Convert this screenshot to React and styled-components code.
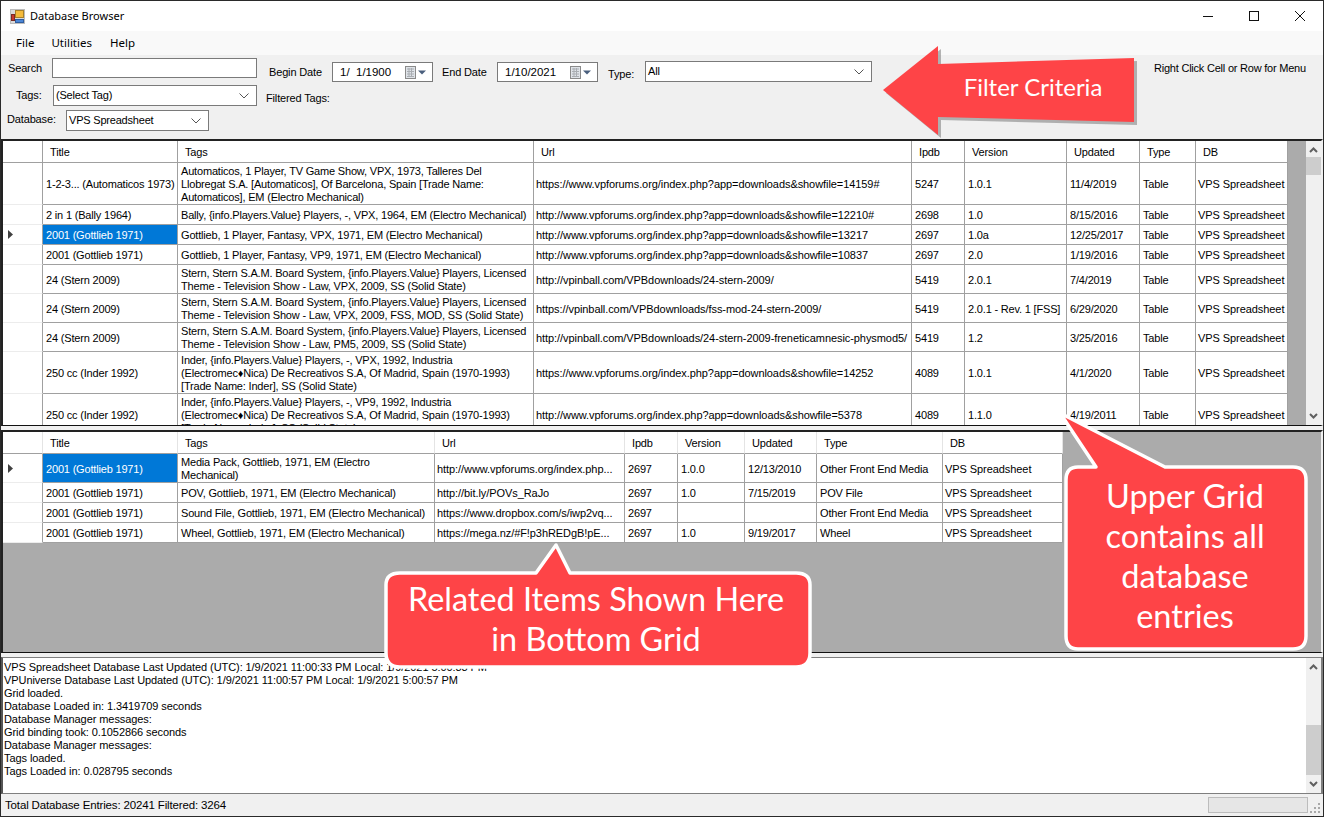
import React from "react";
import styled, { createGlobalStyle } from "styled-components";

const Global = createGlobalStyle`
  html, body { margin: 0; padding: 0; background: #fff; }
  * { box-sizing: border-box; }
`;

const Win = styled.div`
  position: relative;
  width: 1324px;
  height: 817px;
  overflow: hidden;
  display: flex;
  flex-direction: column;
  background: #f0f0f0;
  border: 1px solid #2a2a2a;
  font: 11px/13px "Liberation Sans", Arial, sans-serif;
  letter-spacing: -0.15px;
  color: #000;
`;
const TitleBar = styled.div`
  height: 30px;
  flex: none;
  display: flex;
  align-items: center;
  background: #fff;
  padding-left: 9px;
`;
const TitleText = styled.span`
  font: 11px/16px "Noto Sans", sans-serif;
  letter-spacing: 0;
  margin-left: 5px;
  flex: 1;
`;
const WinBtn = styled.div`
  width: 46px;
  height: 30px;
  display: flex;
  align-items: center;
  justify-content: center;
`;
const MenuBar = styled.div`
  height: 24px;
  flex: none;
  display: flex;
  align-items: center;
  background: #f9f9f9;
  padding-left: 8px;
`;
const MenuItem = styled.span`
  font: 11.5px/16px "Noto Sans", sans-serif;
  letter-spacing: 0;
  padding: 0 7px;
  margin-right: ${p => p.$gap || 0}px;
`;
const Filter = styled.div`
  height: 84px;
  flex: none;
  background: #f0f0f0;
  display: flex;
  flex-direction: column;
`;
const FilterRow = styled.div`
  height: ${p => p.$h}px;
  flex: none;
  display: flex;
  align-items: flex-start;
`;
const Label = styled.span`
  flex: none;
  width: ${p => p.$w}px;
  padding-left: ${p => p.$pad || 0}px;
  margin-top: ${p => p.$top || 0}px;
  white-space: nowrap;
`;
const TextInput = styled.div`
  flex: none;
  width: ${p => p.$w}px;
  height: 20px;
  margin-top: ${p => p.$top || 0}px;
  background: #fff;
  border: 1px solid #7a7a7a;
`;
const Select = styled.div`
  flex: none;
  width: ${p => p.$w}px;
  height: 21px;
  margin-top: ${p => p.$top || 0}px;
  margin-right: ${p => p.$after || 0}px;
  background: #fff;
  border: 1px solid #7a7a7a;
  display: flex;
  align-items: center;
  justify-content: space-between;
  padding: 0 7px 0 2px;
  letter-spacing: -0.2px;
  white-space: nowrap;
`;
const DatePick = styled.div`
  flex: none;
  width: ${p => p.$w}px;
  height: 20px;
  margin-top: ${p => p.$top || 0}px;
  background: #fff;
  border: 1px solid #7a7a7a;
  display: flex;
  align-items: center;
  justify-content: space-between;
  padding: 0 4px 0 7px;
  font-size: 11.5px;
  letter-spacing: 0;
  white-space: pre;
`;
const Hint = styled.span`
  position: absolute;
  left: 1153px;
  top: 61px;
  letter-spacing: -0.22px;
  white-space: nowrap;
`;
const GridPanel = styled.div`
  flex: none;
  height: ${p => p.$h}px;
  display: flex;
  background: #ababab;
  border-style: solid;
  border-width: 2px 2px 1px 2px;
  border-color: #222 #f0f0f0 #111 #222;
  overflow: hidden;
`;
const GridArea = styled.div`
  flex: 1;
  min-width: 0;
  overflow: hidden;
  background: #ababab;
`;
const Table = styled.table`
  table-layout: fixed;
  border-collapse: separate;
  border-spacing: 0;
  width: ${p => p.$w}px;
  background: #fff;
`;
const Th = styled.th`
  height: 22px;
  font-weight: normal;
  text-align: left;
  padding: 2px 0 0 7px;
  border-right: 1px solid ${p => p.$line};
  border-bottom: 1px solid #a0a0a0;
  white-space: nowrap;
  overflow: hidden;
`;
const RowHead = styled.td`
  height: ${p => p.$h}px;
  padding: 0 0 0 5px;
  border-right: 1px solid #a0a0a0;
  border-bottom: 1px solid #ececec;
  vertical-align: middle;
  line-height: 0;
`;
const Td = styled.td`
  height: ${p => p.$h}px;
  padding: 2px 0 0 ${p => (p.$url ? 2 : 3)}px;
  border-right: 1px solid #a0a0a0;
  border-bottom: 1px solid #a0a0a0;
  vertical-align: middle;
  white-space: pre;
  overflow: hidden;
  letter-spacing: ${p => (p.$url ? -0.07 : -0.18)}px;
  background: ${p => (p.$sel ? "#0078d7" : "#fff")};
  color: ${p => (p.$sel ? "#fff" : "#000")};
`;
const VScroll = styled.div`
  flex: none;
  width: 15px;
  background: #f0f0f0;
  display: flex;
  flex-direction: column;
  justify-content: space-between;
  align-items: center;
  position: relative;
  padding: 6px 0;
`;
const Thumb = styled.div`
  position: absolute;
  left: 0;
  right: 0;
  top: ${p => p.$top}px;
  height: ${p => p.$h}px;
  background: #cdcdcd;
`;
const Splitter = styled.div`
  height: ${p => p.$h}px;
  flex: none;
`;
const LogPanel = styled.div`
  flex: none;
  height: 137px;
  display: flex;
  background: #fff;
  border-style: solid;
  border-width: 1px 2px 1px 2px;
  border-color: #7f7f7f #7f7f7f #7f7f7f #555;
`;
const LogText = styled.div`
  flex: 1;
  padding: 3px 0 0 1px;
  letter-spacing: -0.08px;
  white-space: pre;
`;
const Status = styled.div`
  flex: 1;
  display: flex;
  align-items: center;
  justify-content: space-between;
  padding: 1px 0 0 4px;
  font-size: 11.5px;
`;
const Progress = styled.div`
  width: 100px;
  height: 16px;
  margin: -1px 15px 0 0;
  background: #e6e6e6;
  border: 1px solid #bcbcbc;
`;
const Overlay = styled.div`
  position: absolute;
  left: ${p => p.$x}px;
  top: ${p => p.$y}px;
  width: ${p => p.$w}px;
  height: ${p => p.$h}px;
  pointer-events: none;
`;
const Shape = styled.svg`
  position: absolute;
  inset: 0;
  overflow: visible;
`;
const CalloutText = styled.div`
  position: absolute;
  left: ${p => p.$x}px;
  top: ${p => p.$y}px;
  width: ${p => p.$w}px;
  text-align: center;
  color: #fff;
  white-space: pre;
  font-family: Lato, "Noto Sans", sans-serif;
  font-size: ${p => p.$size}px;
  line-height: ${p => p.$lh}px;
  letter-spacing: 0;
`;
const Grip = styled.svg`
  position: absolute;
  right: 2px;
  bottom: 2px;
`;

const Arrow = () => (
  <svg width="5" height="9" viewBox="0 0 5 9"><path d="M0 0 L5 4.5 L0 9Z" fill="#404040" /></svg>
);
const Chevron = () => (
  <svg width="10" height="6" viewBox="0 0 10 6" fill="none" stroke="#555" strokeWidth="1"><path d="M0.5 0.5 L5 5 L9.5 0.5" /></svg>
);
const ScrollUp = () => (
  <svg width="9" height="6" viewBox="0 0 9 6" fill="none" stroke="#606060" strokeWidth="2"><path d="M1 5 L4.5 1.5 L8 5" /></svg>
);
const ScrollDown = () => (
  <svg width="9" height="6" viewBox="0 0 9 6" fill="none" stroke="#606060" strokeWidth="2"><path d="M1 1 L4.5 4.5 L8 1" /></svg>
);
const Calendar = () => (
  <svg width="23" height="13" viewBox="0 0 23 13">
    <rect x="0.5" y="0.5" width="10" height="12" fill="#dfe3e8" stroke="#8a8a8a" />
    <path d="M2 3h7M2 5.5h7M2 8h7M2 10.5h7M4 2v9M6.5 2v9" stroke="#a9adb2" strokeWidth="1" />
    <path d="M13 4.5h8l-4 4z" fill="#4a5f7d" />
  </svg>
);
const AppIcon = () => (
  <svg width="15" height="15" viewBox="0 0 15 15">
    <rect x="0.5" y="0.5" width="14" height="14" fill="#d9d9d9" stroke="#bcbcbc" />
    <rect x="5.5" y="1.5" width="8" height="7" fill="#f5bb3c" stroke="#a8802a" />
    <rect x="1.5" y="5.5" width="3" height="6" fill="#c8372d" stroke="#7b2a22" />
    <rect x="5.5" y="10.5" width="8" height="3" fill="#4b86d6" stroke="#2f5d9e" />
  </svg>
);

const upperCols = [40, 135, 356, 378, 53, 102, 73, 56, 92];
const headers = ["", "Title", "Tags", "Url", "Ipdb", "Version", "Updated", "Type", "DB"];
const lowerCols = [40, 135, 257, 190, 53, 67, 72, 126, 120];

const VF = "https://www.vpforums.org/index.php?app=downloads&showfile=";
const VFH = "http://www.vpforums.org/index.php?app=downloads&showfile=";
const VPS = "VPS Spreadsheet";

const upperRows = [
  { h: 42, c: ["1-2-3... (Automaticos 1973)", "Automaticos, 1 Player, TV Game Show, VPX, 1973, Talleres Del\nLlobregat S.A. [Automaticos], Of Barcelona, Spain [Trade Name:\nAutomaticos], EM (Electro Mechanical)", VF + "14159#", "5247", "1.0.1", "11/4/2019", "Table", VPS] },
  { h: 20, c: ["2 in 1 (Bally 1964)", "Bally, {info.Players.Value} Players, -, VPX, 1964, EM (Electro Mechanical)", VFH + "12210#", "2698", "1.0", "8/15/2016", "Table", VPS] },
  { h: 20, cur: true, c: ["2001 (Gottlieb 1971)", "Gottlieb, 1 Player, Fantasy, VPX, 1971, EM (Electro Mechanical)", VFH + "13217", "2697", "1.0a", "12/25/2017", "Table", VPS] },
  { h: 20, c: ["2001 (Gottlieb 1971)", "Gottlieb, 1 Player, Fantasy, VP9, 1971, EM (Electro Mechanical)", VFH + "10837", "2697", "2.0", "1/19/2016", "Table", VPS] },
  { h: 29, c: ["24 (Stern 2009)", "Stern, Stern S.A.M. Board System, {info.Players.Value} Players, Licensed\nTheme - Television Show - Law, VPX, 2009, SS (Solid State)", "http://vpinball.com/VPBdownloads/24-stern-2009/", "5419", "2.0.1", "7/4/2019", "Table", VPS] },
  { h: 29, c: ["24 (Stern 2009)", "Stern, Stern S.A.M. Board System, {info.Players.Value} Players, Licensed\nTheme - Television Show - Law, VPX, 2009, FSS, MOD, SS (Solid State)", "https://vpinball.com/VPBdownloads/fss-mod-24-stern-2009/", "5419", "2.0.1 - Rev. 1 [FSS]", "6/29/2020", "Table", VPS] },
  { h: 29, c: ["24 (Stern 2009)", "Stern, Stern S.A.M. Board System, {info.Players.Value} Players, Licensed\nTheme - Television Show - Law, PM5, 2009, SS (Solid State)", "http://vpinball.com/VPBdownloads/24-stern-2009-freneticamnesic-physmod5/", "5419", "1.2", "3/25/2016", "Table", VPS] },
  { h: 42, c: ["250 cc (Inder 1992)", "Inder, {info.Players.Value} Players, -, VPX, 1992, Industria\n(Electromec\u2666Nica) De Recreativos S.A, Of Madrid, Spain (1970-1993)\n[Trade Name: Inder], SS (Solid State)", VF + "14252", "4089", "1.0.1", "4/1/2020", "Table", VPS] },
  { h: 42, c: ["250 cc (Inder 1992)", "Inder, {info.Players.Value} Players, -, VP9, 1992, Industria\n(Electromec\u2666Nica) De Recreativos S.A, Of Madrid, Spain (1970-1993)\n[Trade Name: Inder], SS (Solid State)", VFH + "5378", "4089", "1.1.0", "4/19/2011", "Table", VPS] },
];
const G = "2001 (Gottlieb 1971)";
const lowerRows = [
  { h: 29, cur: true, c: [G, "Media Pack, Gottlieb, 1971, EM (Electro\nMechanical)", "http://www.vpforums.org/index.php...", "2697", "1.0.0", "12/13/2010", "Other Front End Media", VPS] },
  { h: 20, c: [G, "POV, Gottlieb, 1971, EM (Electro Mechanical)", "http://bit.ly/POVs_RaJo", "2697", "1.0", "7/15/2019", "POV File", VPS] },
  { h: 20, c: [G, "Sound File, Gottlieb, 1971, EM (Electro Mechanical)", "https://www.dropbox.com/s/iwp2vq...", "2697", "", "", "Other Front End Media", VPS] },
  { h: 20, c: [G, "Wheel, Gottlieb, 1971, EM (Electro Mechanical)", "https://mega.nz/#F!p3hREDgB!pE...", "2697", "1.0", "9/19/2017", "Wheel", VPS] },
];
const logLines = [
  "VPS Spreadsheet Database Last Updated (UTC): 1/9/2021 11:00:33 PM Local: 1/9/2021 5:00:33 PM",
  "VPUniverse Database Last Updated (UTC): 1/9/2021 11:00:57 PM Local: 1/9/2021 5:00:57 PM",
  "Grid loaded.",
  "Database Loaded in: 1.3419709 seconds",
  "Database Manager messages:",
  "Grid binding took: 0.1052866 seconds",
  "Database Manager messages:",
  "Tags loaded.",
  "Tags Loaded in: 0.028795 seconds",
].join("\n");

const URL_COLS = [2, 7];

const DataGrid = ({ cols, rows, line }) => (
  <Table $w={cols.reduce((a, b) => a + b, 0)}>
    <colgroup>
      {cols.map((w, i) => <col key={i} style={{ width: w }} />)}
    </colgroup>
    <thead>
      <tr>
        {headers.map((t, i) => <Th key={i} $line={line}>{t}</Th>)}
      </tr>
    </thead>
    <tbody>
      {rows.map((r, i) => (
        <tr key={i}>
          <RowHead $h={r.h}>{r.cur && <Arrow />}</RowHead>
          {r.c.map((t, j) => (
            <Td key={j} $h={r.h} $sel={r.cur && j === 0} $url={URL_COLS.includes(j)}>{t}</Td>
          ))}
        </tr>
      ))}
    </tbody>
  </Table>
);

export default function App() {
  return (
    <>
      <Global />
      <Win>
        <TitleBar>
          <AppIcon />
          <TitleText>Database Browser</TitleText>
          <WinBtn><svg width="10" height="10"><path d="M0 5.5H10" stroke="#111" /></svg></WinBtn>
          <WinBtn><svg width="10" height="10"><rect x="0.5" y="0.5" width="9" height="9" fill="none" stroke="#111" /></svg></WinBtn>
          <WinBtn><svg width="10" height="10"><path d="M0 0L10 10M10 0L0 10" stroke="#111" /></svg></WinBtn>
        </TitleBar>
        <MenuBar>
          <MenuItem $gap={3}>File</MenuItem>
          <MenuItem $gap={4}>Utilities</MenuItem>
          <MenuItem>Help</MenuItem>
        </MenuBar>
        <Filter>
          <FilterRow $h={29}>
            <Label $w={51} $pad={7} $top={7}>Search</Label>
            <TextInput $w={205} $top={3} />
            <Label $w={75} $pad={12} $top={11}>Begin Date</Label>
            <DatePick $w={101} $top={7}>{"1/  1/1900"}<Calendar /></DatePick>
            <Label $w={64} $pad={9} $top={11}>End Date</Label>
            <DatePick $w={101} $top={7}>{"1/10/2021"}<Calendar /></DatePick>
            <Label $w={47} $pad={10} $top={13}>Type:</Label>
            <Select $w={227} $top={6}>All<Chevron /></Select>
          </FilterRow>
          <FilterRow $h={25}>
            <Label $w={52} $pad={15} $top={5}>Tags:</Label>
            <Select $w={204} $top={1} $after={9}>(Select Tag)<Chevron /></Select>
            <Label $w={80} $top={8}>Filtered Tags:</Label>
          </FilterRow>
          <FilterRow $h={30}>
            <Label $w={65} $pad={6} $top={4}>Database:</Label>
            <Select $w={143} $top={1}>VPS Spreadsheet<Chevron /></Select>
          </FilterRow>
          <Hint>Right Click Cell or Row for Menu</Hint>
        </Filter>
        <GridPanel $h={287}>
          <GridArea>
            <DataGrid cols={upperCols} rows={upperRows} line="#a0a0a0" />
          </GridArea>
          <VScroll>
            <ScrollUp />
            <Thumb $top={16} $h={18} />
            <ScrollDown />
          </VScroll>
        </GridPanel>
        <Splitter $h={4} />
        <GridPanel $h={223}>
          <GridArea>
            <DataGrid cols={lowerCols} rows={lowerRows} line="#e4e4e4" />
          </GridArea>
        </GridPanel>
        <Splitter $h={4} />
        <LogPanel>
          <LogText>{logLines}</LogText>
          <VScroll>
            <ScrollUp />
            <Thumb $top={67} $h={50} />
            <ScrollDown />
          </VScroll>
        </LogPanel>
        <Status>
          <span>Total Database Entries: 20241 Filtered: 3264</span>
          <Progress />
        </Status>
        <Grip width="11" height="11" viewBox="0 0 11 11" fill="#a8a8a8">
          <rect x="8" y="0" width="2" height="2" />
          <rect x="4" y="4" width="2" height="2" /><rect x="8" y="4" width="2" height="2" />
          <rect x="0" y="8" width="2" height="2" /><rect x="4" y="8" width="2" height="2" /><rect x="8" y="8" width="2" height="2" />
        </Grip>

        <Overlay $x={882} $y={45} $w={254} $h={90}>
          <Shape width="254" height="90" viewBox="0 0 254 90">
            <path d="M0 44 L55 0 L55 18 L251 12 L251 76 L55 71 L55 89Z" fill="#7a7a7a" opacity="0.55" transform="translate(3,3)" />
            <path d="M0 44 L55 0 L55 18 L251 12 L251 76 L55 71 L55 89Z" fill="#fe4447" />
          </Shape>
          <CalloutText $x={55} $y={25} $w={190} $size={24} $lh={32}>Filter Criteria</CalloutText>
        </Overlay>

        <Overlay $x={1059} $y={412} $w={250} $h={238}>
          <Shape width="250" height="238" viewBox="0 0 250 238">
            <path d="M0 0 L105 54 L233 54 Q246 54 246 67 L246 223 Q246 236 233 236 L18 236 Q6 236 6 223 L6 67 Q6 54 18 54 L36 54Z" fill="#fe4447" stroke="#fff" strokeWidth="3.5" strokeLinejoin="round" />
          </Shape>
          <CalloutText $x={5} $y={63} $w={240} $size={32.5} $lh={40}>{"Upper Grid\ncontains all\ndatabase\nentries"}</CalloutText>
        </Overlay>

        <Overlay $x={383} $y={542} $w={428} $h={126}>
          <Shape width="428" height="126" viewBox="0 0 428 126">
            <path d="M172 2 L186 30 L412 30 Q426 30 426 42 L426 110 Q426 124 412 124 L16 124 Q2 124 2 110 L2 42 Q2 30 16 30 L152 30Z" fill="#fe4447" stroke="#fff" strokeWidth="3.5" strokeLinejoin="round" />
          </Shape>
          <CalloutText $x={0} $y={36} $w={424} $size={32.4} $lh={40}>{"Related Items Shown Here\nin Bottom Grid"}</CalloutText>
        </Overlay>
      </Win>
    </>
  );
}
